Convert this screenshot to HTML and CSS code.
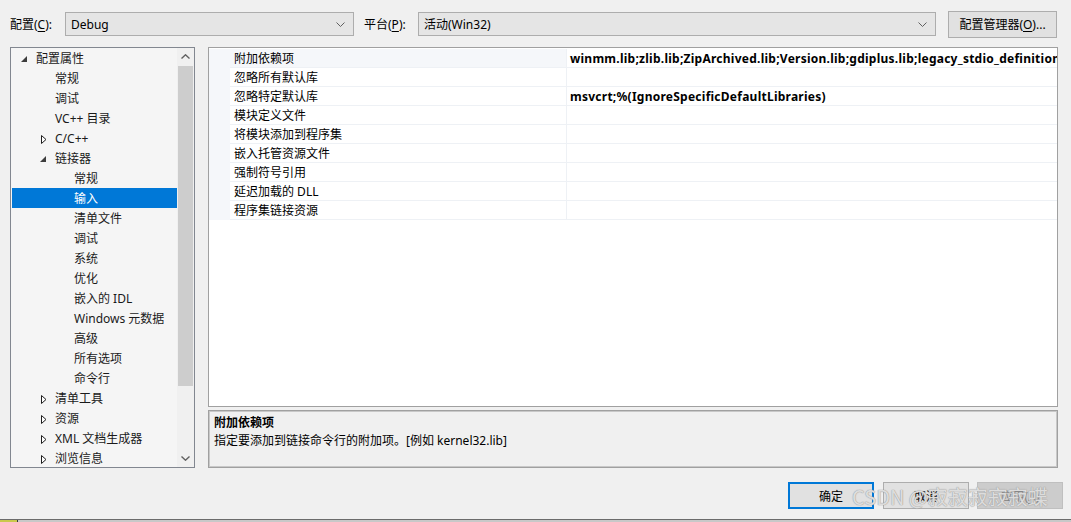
FILE: index.html
```html
<!DOCTYPE html>
<html lang="zh-CN">
<head>
<meta charset="utf-8">
<title>属性页</title>
<link rel="stylesheet" href="styles.css">
</head>
<body>
<div class="dialog">
  <div class="topbar">
    <span class="lbl">配置(<u>C</u>):</span>
    <div class="combo c1"><span>Debug</span><svg class="chev" width="9" height="5" viewBox="0 0 9 5"><path d="M0.5 0.5 L4.5 4.5 L8.5 0.5" fill="none" stroke="#606060" stroke-width="1"/></svg></div>
    <span class="lbl l2">平台(<u>P</u>):</span>
    <div class="combo c2"><span>活动(Win32)</span><svg class="chev" width="9" height="5" viewBox="0 0 9 5"><path d="M0.5 0.5 L4.5 4.5 L8.5 0.5" fill="none" stroke="#606060" stroke-width="1"/></svg></div>
    <div class="btn mgr">配置管理器(<u>O</u>)...</div>
  </div>

  <div class="main">
    <div class="tree">
      <ul class="nodes">
        <li class="node l0"><span class="tw"><svg width="6" height="6" viewBox="0 0 6 6"><polygon points="6,0 6,6 0,6" fill="#3c3c3c"/></svg></span>配置属性</li>
        <li class="node l1"><span class="tw"></span>常规</li>
        <li class="node l1"><span class="tw"></span>调试</li>
        <li class="node l1"><span class="tw"></span>VC++ 目录</li>
        <li class="node l1"><span class="tw"><svg class="col" width="6" height="9" viewBox="0 0 6 9"><polygon points="0.5,0.5 5,4.5 0.5,8.5" fill="#fff" stroke="#1e1e1e" stroke-width="1"/></svg></span>C/C++</li>
        <li class="node l1"><span class="tw"><svg width="6" height="6" viewBox="0 0 6 6"><polygon points="6,0 6,6 0,6" fill="#3c3c3c"/></svg></span>链接器</li>
        <li class="node l2"><span class="tw"></span>常规</li>
        <li class="node l2 sel"><span class="tw"></span>输入</li>
        <li class="node l2"><span class="tw"></span>清单文件</li>
        <li class="node l2"><span class="tw"></span>调试</li>
        <li class="node l2"><span class="tw"></span>系统</li>
        <li class="node l2"><span class="tw"></span>优化</li>
        <li class="node l2"><span class="tw"></span>嵌入的 IDL</li>
        <li class="node l2"><span class="tw"></span>Windows 元数据</li>
        <li class="node l2"><span class="tw"></span>高级</li>
        <li class="node l2"><span class="tw"></span>所有选项</li>
        <li class="node l2"><span class="tw"></span>命令行</li>
        <li class="node l1"><span class="tw"><svg class="col" width="6" height="9" viewBox="0 0 6 9"><polygon points="0.5,0.5 5,4.5 0.5,8.5" fill="#fff" stroke="#1e1e1e" stroke-width="1"/></svg></span>清单工具</li>
        <li class="node l1"><span class="tw"><svg class="col" width="6" height="9" viewBox="0 0 6 9"><polygon points="0.5,0.5 5,4.5 0.5,8.5" fill="#fff" stroke="#1e1e1e" stroke-width="1"/></svg></span>资源</li>
        <li class="node l1"><span class="tw"><svg class="col" width="6" height="9" viewBox="0 0 6 9"><polygon points="0.5,0.5 5,4.5 0.5,8.5" fill="#fff" stroke="#1e1e1e" stroke-width="1"/></svg></span>XML 文档生成器</li>
        <li class="node l1"><span class="tw"><svg class="col" width="6" height="9" viewBox="0 0 6 9"><polygon points="0.5,0.5 5,4.5 0.5,8.5" fill="#fff" stroke="#1e1e1e" stroke-width="1"/></svg></span>浏览信息</li>
      </ul>
      <div class="vscroll">
        <div class="arrow"><svg width="9" height="5" viewBox="0 0 9 5"><path d="M0.5 4.5 L4.5 0.8 L8.5 4.5" fill="none" stroke="#606060" stroke-width="1.4"/></svg></div>
        <div class="track"><div class="thumb"></div></div>
        <div class="arrow"><svg width="9" height="5" viewBox="0 0 9 5"><path d="M0.5 0.5 L4.5 4.2 L8.5 0.5" fill="none" stroke="#606060" stroke-width="1.4"/></svg></div>
      </div>
    </div>

    <div class="right">
      <div class="grid">
        <div class="prow first"><span class="m"></span><span class="nm">附加依赖项</span><span class="val">winmm.lib;zlib.lib;ZipArchived.lib;Version.lib;gdiplus.lib;legacy_stdio_definitions.lib;%(AdditionalDependencies)</span></div>
        <div class="prow"><span class="m"></span><span class="nm">忽略所有默认库</span><span class="val"></span></div>
        <div class="prow"><span class="m"></span><span class="nm">忽略特定默认库</span><span class="val">msvcrt;%(IgnoreSpecificDefaultLibraries)</span></div>
        <div class="prow"><span class="m"></span><span class="nm">模块定义文件</span><span class="val"></span></div>
        <div class="prow"><span class="m"></span><span class="nm">将模块添加到程序集</span><span class="val"></span></div>
        <div class="prow"><span class="m"></span><span class="nm">嵌入托管资源文件</span><span class="val"></span></div>
        <div class="prow"><span class="m"></span><span class="nm">强制符号引用</span><span class="val"></span></div>
        <div class="prow"><span class="m"></span><span class="nm">延迟加载的 DLL</span><span class="val"></span></div>
        <div class="prow"><span class="m"></span><span class="nm">程序集链接资源</span><span class="val"></span></div>
      </div>
      <div class="desc">
        <div class="dtitle">附加依赖项</div>
        <div class="dtext">指定要添加到链接命令行的附加项。[例如 kernel32.lib]</div>
      </div>
    </div>
  </div>

  <div class="footer">
    <div class="btn ok">确定</div>
    <div class="btn cancel">取消</div>
    <div class="btn apply">应用(<u>A</u>)</div>
  </div>
</div>
<div class="taskbar"><span class="tb-y"></span></div>
<div class="watermark">CSDN @寂寂寂寂寂蝶</div>
</body>
</html>
```

FILE: styles.css
```css
* { box-sizing: border-box; }
html, body {
  margin: 0;
  padding: 0;
}
body {
  width: 1071px;
  height: 522px;
  overflow: hidden;
  background: #f0f0f0;
  font-family: "Noto Sans", "Noto Sans CJK SC", sans-serif;
  font-size: 12px;
  color: #000;
  position: relative;
}
u { text-decoration: underline; text-underline-offset: 2px; }

.dialog {
  height: 519px;
  display: flex;
  flex-direction: column;
}

/* top bar */
.topbar {
  display: flex;
  align-items: center;
  height: 26px;
  margin-top: 11px;
  padding-left: 10px;
}
.lbl {
  width: 55px;
  line-height: 16px;
  padding-top: 2px;
  white-space: nowrap;
}
.lbl.l2 { margin-left: 10px; width: 54px; }
.combo {
  height: 24px;
  background: #e5e5e5;
  border: 1px solid #adadad;
  display: flex;
  align-items: center;
  justify-content: space-between;
  padding: 0 8px 0 5px;
  line-height: 16px;
}
.combo span { padding-top: 2px; }
.combo.c1 { width: 289px; }
.combo.c2 { width: 518px; }
.chev { display: block; }

.btn {
  height: 27px;
  background: #e1e1e1;
  border: 1px solid #adadad;
  display: flex;
  align-items: center;
  justify-content: center;
  line-height: 16px;
  padding-top: 2px;
  white-space: nowrap;
}
.btn.mgr { width: 109px; margin-left: 12px; }

/* main area */
.main {
  display: flex;
  margin-top: 10px;
  height: 421px;
  padding-left: 10px;
}
.tree {
  width: 185px;
  height: 421px;
  border: 1px solid #828790;
  background: #f5f5f5;
  display: flex;
}
.nodes {
  list-style: none;
  margin: 0;
  padding: 0 0 0 1px;
  flex: 1;
  overflow: hidden;
}
.node {
  height: 20px;
  display: flex;
  align-items: center;
  white-space: nowrap;
  color: #1a1a1a;
  line-height: 16px;
  padding-top: 2px;
}
.node.l0 { padding-left: 5px; }
.node.l1 { padding-left: 24px; }
.node.l2 { padding-left: 43px; }
.node.sel { background: #0078d7; color: #fff; }
.tw {
  width: 19px;
  flex: none;
  display: flex;
  align-items: center;
  padding-left: 4px;
}
.tw svg { display: block; }
.tw svg.col { margin-left: 1px; }

.vscroll {
  width: 17px;
  background: #f0f0f0;
  display: flex;
  flex-direction: column;
}
.arrow {
  height: 17px;
  display: flex;
  align-items: center;
  justify-content: center;
}
.track { flex: 1; }
.thumb {
  margin: 1px 1px 0 1px;
  height: 320px;
  background: #cdcdcd;
}

.right {
  width: 850px;
  margin-left: 13px;
  display: flex;
  flex-direction: column;
}
.grid {
  height: 360px;
  border: 1px solid #a0a0a0;
  background: #fff;
  padding-top: 1px;
}
.prow {
  display: grid;
  grid-template-columns: 21px 336px 1fr;
  height: 19px;
}
.prow .m { background: #f5f7fa; }
.prow .nm {
  padding-left: 4px;
  padding-top: 2px;
  line-height: 16px;
  border-bottom: 1px solid #eef1f5;
  white-space: nowrap;
}
.prow .val {
  padding-left: 3px;
  padding-top: 2px;
  line-height: 16px;
  font-weight: bold;
  letter-spacing: 0.25px;
  border-left: 1px solid #eef1f5;
  border-bottom: 1px solid #eef1f5;
  white-space: nowrap;
  overflow: hidden;
}
.prow.first .nm { background: #f5f7fa; }

.desc {
  margin-top: 3px;
  height: 58px;
  border: 1px solid #a0a0a0;
  box-shadow: inset 1px 1px 0 #c8c8c8, inset -1px -1px 0 #c8c8c8;
  padding: 3px 5px;
  line-height: 18px;
}
.dtitle { font-weight: bold; }

/* footer */
.footer {
  display: flex;
  justify-content: flex-end;
  padding: 14px 8px 0 0;
}
.footer .btn { width: 86px; }
.btn.ok { border: 2px solid #0078d7; }
.btn.cancel { margin-left: 9px; }
.btn.apply {
  margin-left: 8px;
  background: #cccccc;
  border-color: #bfbfbf;
  color: #838383;
}

.taskbar {
  height: 3px;
  border-top: 1px solid #6b6b6b;
  background: #c8c8c8;
  display: flex;
}
.tb-y {
  width: 18px;
  background: #c9c84c;
  border-right: 1px solid #3a3a3a;
}

.watermark {
  position: absolute;
  left: 852px;
  top: 484px;
  font-family: "Noto Sans CJK SC", sans-serif;
  font-size: 20px;
  line-height: 26px;
  color: rgba(240, 240, 240, 0.8);
  text-shadow: 0 0 1px #999999, 0 0 1px #999999;
  white-space: nowrap;
}
```
